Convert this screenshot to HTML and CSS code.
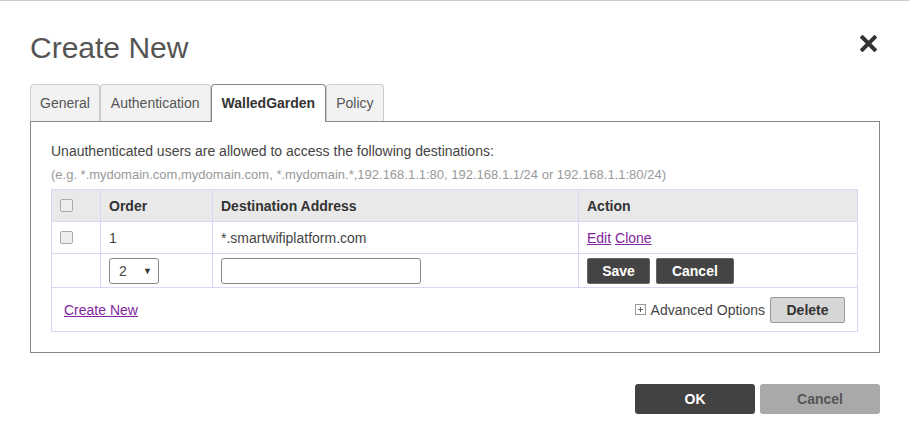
FILE: index.html
```html
<!DOCTYPE html>
<html lang="en">
<head>
    <meta charset="UTF-8">
    <title>Create New</title>
    <link rel="stylesheet" href="styles.css">
</head>
<body>
    <div class="modal">
        <div class="modal-header">
            <h1>Create New</h1>
            <button type="button" class="close-btn" title="Close">
                <svg width="17" height="17" viewBox="0 0 17 17"><path d="M2.5 2.5L14.5 14.5M14.5 2.5L2.5 14.5" stroke="#333" stroke-width="4" stroke-linecap="square"/></svg>
            </button>
        </div>

        <ul class="tabs">
            <li class="tab">General</li>
            <li class="tab">Authentication</li>
            <li class="tab active">WalledGarden</li>
            <li class="tab">Policy</li>
        </ul>

        <div class="tab-panel">
            <p class="intro">Unauthenticated users are allowed to access the following destinations:</p>
            <p class="hint">(e.g. *.mydomain.com,mydomain.com, *.mydomain.*,192.168.1.1:80, 192.168.1.1/24 or 192.168.1.1:80/24)</p>

            <table class="wg-table">
                <thead>
                    <tr>
                        <th class="col-check"><span class="check"></span></th>
                        <th class="col-order">Order</th>
                        <th class="col-dest">Destination Address</th>
                        <th class="col-action">Action</th>
                    </tr>
                </thead>
                <tbody>
                    <tr class="row-item">
                        <td><span class="check"></span></td>
                        <td>1</td>
                        <td>*.smartwifiplatform.com</td>
                        <td><a href="#">Edit</a> <a href="#">Clone</a></td>
                    </tr>
                    <tr class="row-edit">
                        <td></td>
                        <td>
                            <div class="select-wrap">
                                <select class="order-select">
                                    <option>2</option>
                                </select>
                                <span class="caret">&#9660;</span>
                            </div>
                        </td>
                        <td><input type="text" class="dest-input"></td>
                        <td>
                            <button type="button" class="btn btn-dark">Save</button>
                            <button type="button" class="btn btn-dark btn-cancel">Cancel</button>
                        </td>
                    </tr>
                    <tr class="row-foot">
                        <td colspan="4">
                            <div class="foot-bar">
                                <a href="#">Create New</a>
                                <div class="foot-right">
                                    <span class="plus-box"></span>
                                    <span class="adv">Advanced Options</span>
                                    <button type="button" class="btn btn-light">Delete</button>
                                </div>
                            </div>
                        </td>
                    </tr>
                </tbody>
            </table>
        </div>

        <div class="modal-footer">
            <button type="button" class="btn-big btn-ok">OK</button>
            <button type="button" class="btn-big btn-muted">Cancel</button>
        </div>
    </div>
</body>
</html>
```

FILE: styles.css
```css
body { margin: 0; background: #fff; font-family: "Liberation Sans", Arial, sans-serif; color: #444; }
.modal { border-top: 1px solid #ccc; padding: 29px 29px 0 30px; }

.modal-header { display: flex; justify-content: space-between; align-items: flex-start; }
.modal-header h1 { margin: 0; font-size: 30px; line-height: 36px; font-weight: normal; color: #555; }
.close-btn { background: none; border: none; padding: 0; margin: 5px 3px 0 0; cursor: pointer; width: 17px; height: 17px; }
.close-btn svg { display: block; }

.tabs { list-style: none; margin: 18px 0 -1px 0; padding: 0; display: flex; }
.tab { padding: 10px 10px; line-height: 16px; font-size: 14px; color: #555; background: #f2f2f2; border: 1px solid #ccc; border-bottom: none; border-radius: 4px 4px 0 0; height: 16px; }
.tab:first-child, .tab:last-child { padding: 10px 9px; }
.tab.active { background: #fff; border-color: #888; font-weight: bold; color: #333; height: 17px; position: relative; }

.tab-panel { border: 1px solid #888; padding: 20px 20px 20px 20px; }
.intro { margin: 0; font-size: 14px; line-height: 18px; color: #444; }
.hint { margin: 7px 0 6px 0; font-size: 13px; line-height: 16px; color: #999; }

.wg-table { width: 807px; border-collapse: collapse; table-layout: fixed; font-size: 14px; color: #444; }
.wg-table th, .wg-table td { border: 1px solid #ddd4f8; text-align: left; padding: 0 8px; vertical-align: middle; }
.wg-table thead tr { height: 32px; background: #e9e9e9; }
.wg-table th { font-weight: bold; color: #333; }
.col-check { width: 32px; }
.col-order { width: 95px; }
.col-dest { width: 349px; }
.row-item { height: 32px; }
.row-edit { height: 34px; }
.row-foot { height: 44px; }
.row-foot td { padding: 0 12px; }

.check { display: block; width: 11px; height: 11px; border: 1px solid #aaa; border-radius: 2px; background: #eee; }

.wg-table a { color: #81259d; }

.select-wrap { position: relative; width: 50px; }
.order-select { appearance: none; -webkit-appearance: none; width: 50px; height: 26px; border: 1px solid #888; border-radius: 3px; background: #fff; font-family: inherit; font-size: 14px; color: #444; padding: 0 0 0 9px; display: block; }
.caret { position: absolute; right: 7px; top: 8px; font-size: 9px; color: #333; pointer-events: none; }

.dest-input { display: block; width: 200px; height: 26px; box-sizing: border-box; border: 1px solid #888; border-radius: 3px; }

.btn { height: 26px; font-family: inherit; font-size: 14px; font-weight: bold; cursor: pointer; border-radius: 2px; vertical-align: middle; }
.btn-dark { background: #444; color: #fff; border: 1px solid #666; width: 63px; }
.btn-cancel { width: 78px; margin-left: 2px; }
.btn-light { background: #d6d6d6; color: #333; border: 1px solid #999; width: 75px; }

.foot-bar { display: flex; justify-content: space-between; align-items: center; }
.foot-right { display: flex; align-items: center; }
.plus-box { width: 9px; height: 9px; border: 1px solid #999; position: relative; margin-right: 5px; }
.plus-box::before { content: ""; position: absolute; left: 2px; top: 4px; width: 5px; height: 1px; background: #666; }
.plus-box::after { content: ""; position: absolute; left: 4px; top: 2px; width: 1px; height: 5px; background: #666; }
.adv { margin-right: 5px; color: #444; }

.modal-footer { display: flex; justify-content: flex-end; gap: 5px; margin-top: 31px; }
.btn-big { width: 120px; height: 30px; border: none; border-radius: 3px; font-family: inherit; font-size: 14px; font-weight: bold; cursor: pointer; }
.btn-ok { background: #424242; color: #fff; }
.btn-muted { background: #a9a9a9; color: #555; }
```
